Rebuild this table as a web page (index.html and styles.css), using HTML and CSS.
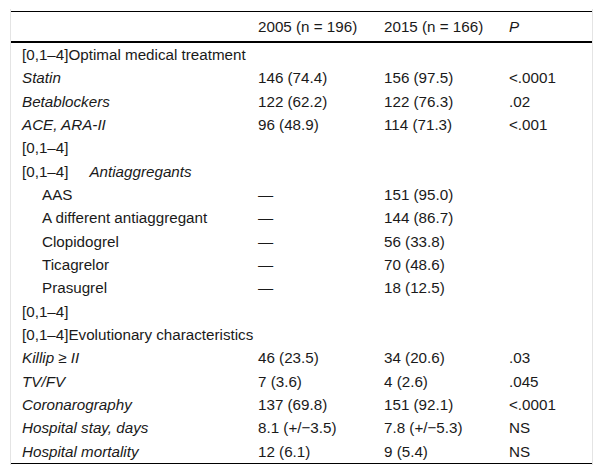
FILE: index.html
```html
<!DOCTYPE html>
<html>
<head>
<meta charset="utf-8">
<link rel="stylesheet" href="styles.css">
</head>
<body>
<div class="frame">
<table class="data">
<colgroup><col class="c1"><col class="c2"><col class="c3"><col class="c4"></colgroup>
<thead>
<tr><th></th><th>2005 (n = 196)</th><th>2015 (n = 166)</th><th><i>P</i></th></tr>
</thead>
<tbody>
<tr><td colspan="4">[0,1–4]Optimal medical treatment</td></tr>
<tr><td><i>Statin</i></td><td>146 (74.4)</td><td>156 (97.5)</td><td>&lt;.0001</td></tr>
<tr><td><i>Betablockers</i></td><td>122 (62.2)</td><td>122 (76.3)</td><td>.02</td></tr>
<tr><td><i>ACE, ARA-II</i></td><td>96 (48.9)</td><td>114 (71.3)</td><td>&lt;.001</td></tr>
<tr><td colspan="4">[0,1–4]</td></tr>
<tr><td colspan="4">[0,1–4]<i class="sub">Antiaggregants</i></td></tr>
<tr><td class="ind">AAS</td><td>—</td><td>151 (95.0)</td><td></td></tr>
<tr><td class="ind">A different antiaggregant</td><td>—</td><td>144 (86.7)</td><td></td></tr>
<tr><td class="ind">Clopidogrel</td><td>—</td><td>56 (33.8)</td><td></td></tr>
<tr><td class="ind">Ticagrelor</td><td>—</td><td>70 (48.6)</td><td></td></tr>
<tr><td class="ind">Prasugrel</td><td>—</td><td>18 (12.5)</td><td></td></tr>
<tr><td colspan="4">[0,1–4]</td></tr>
<tr><td colspan="4">[0,1–4]Evolutionary characteristics</td></tr>
<tr><td><i>Killip ≥ II</i></td><td>46 (23.5)</td><td>34 (20.6)</td><td>.03</td></tr>
<tr><td><i>TV/FV</i></td><td>7 (3.6)</td><td>4 (2.6)</td><td>.045</td></tr>
<tr><td><i>Coronarography</i></td><td>137 (69.8)</td><td>151 (92.1)</td><td>&lt;.0001</td></tr>
<tr><td><i>Hospital stay, days</i></td><td>8.1 (+/−3.5)</td><td>7.8 (+/−5.3)</td><td>NS</td></tr>
<tr><td><i>Hospital mortality</i></td><td>12 (6.1)</td><td>9 (5.4)</td><td>NS</td></tr>
</tbody>
</table>
</div>
</body>
</html>
```
FILE: styles.css
```css
html, body {
  margin: 0;
  padding: 0;
  background: #fff;
}
body {
  font-family: "Liberation Sans", Arial, sans-serif;
  font-size: 15.2px;
  color: #1a1a1a;
}
.frame {
  margin: 9px 10px 0 10px;
  width: 581px;
  border-left: 1px solid #e4e4e4;
  border-right: 1px solid #e4e4e4;
  padding: 2px 0 1px 0;
}
.data {
  width: 581px;
  border-collapse: collapse;
  table-layout: fixed;
  border-top: 1px solid #000;
  border-bottom: 1px solid #000;
}
.c1 { width: 236px; }
.c2 { width: 126px; }
.c3 { width: 125px; }
.c4 { width: 94px; }
.data th {
  font-weight: normal;
  text-align: left;
  height: 29px;
  padding: 0 0 0 11px;
  line-height: 29px;
  border-bottom: 2px solid #000;
  white-space: nowrap;
}
.data td {
  padding: 0 0 0 11px;
  height: 23.33px;
  line-height: 23.33px;
  white-space: nowrap;
}
.data td.ind {
  padding-left: 31px;
}
.sub {
  margin-left: 21px;
}
```
